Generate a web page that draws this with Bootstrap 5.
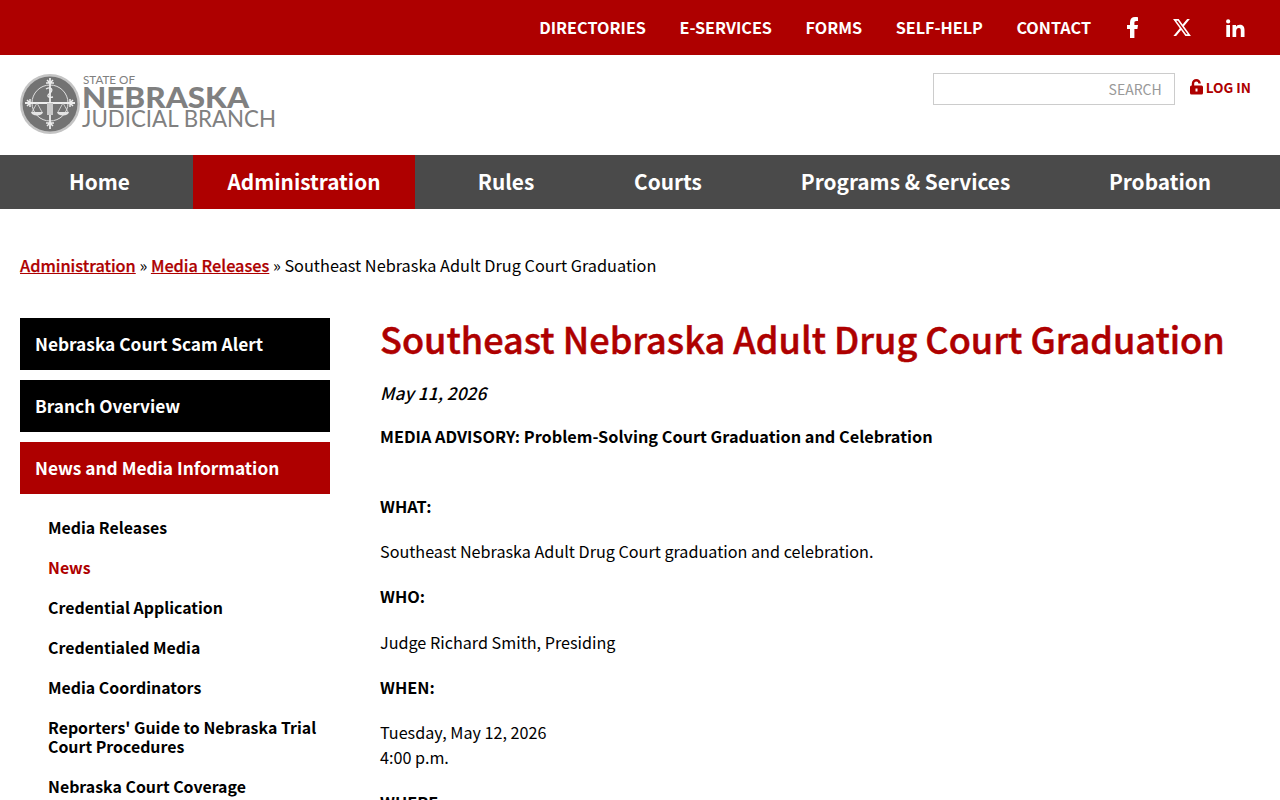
<!DOCTYPE html>
<html lang="en">
<head>
  <meta charset="UTF-8">
  <title>Southeast Nebraska Adult Drug Court Graduation</title>
  <meta name="viewport" content="width=device-width, initial-scale=1">
  <link href="https://cdn.jsdelivr.net/npm/bootstrap@5.3.0/dist/css/bootstrap.min.css" rel="stylesheet">
  <style>
    html, body { height: 800px; overflow: hidden; }
    body { font-family: "Noto Sans CJK SC", "Liberation Sans", sans-serif; font-size: 16.18px; line-height: 25px; color: #000; }
    a { color: #ae0000; }
    .top-strip { height: 55px; background: #ae0000; padding-right: 35px; }
    .top-strip a { color: #fff; font-weight: 700; font-size: 16.2px; text-decoration: none; }
    .top-links { gap: 33.5px; }
    .top-social { gap: 35px; margin-left: 36px; }
    .brand-row { height: 100px; padding: 18px 29px 0 20px; }
    .search-box { width: 242px; height: 32px; border: 1px solid #ccc; font-size: 14px; color: #999; padding: 3px 12px 0 0; text-align: right; }
    .login-link { margin-left: 15px; font-size: 13.6px; font-weight: 700; text-decoration: none; line-height: 28px; gap: 3px; }
    .main-menu { height: 54px; background: #4a4a4a; }
    .main-menu a { display: block; height: 54px; line-height: 53px; font-size: 20.8px; font-weight: 600; color: #fff; text-decoration: none; text-align: center; }
    .main-menu a.on { background: #ae0000; }
    .main-menu a:nth-child(1) { width: 193px; padding-left: 6px; }
    .main-menu a:nth-child(2) { width: 222px; }
    .main-menu a:nth-child(3) { width: 182px; }
    .main-menu a:nth-child(4) { width: 142px; }
    .main-menu a:nth-child(5) { width: 333px; }
    .main-menu a:nth-child(6) { width: 176px; }
    .crumbs { padding: 44px 20px 0; height: 109px; font-size: 16.3px; }
    .crumbs a { font-weight: 500; -webkit-text-stroke: 0.25px #ae0000; }
    .page-cols { padding: 0 20px; gap: 50px; }
    .side-col { width: 310px; flex: none; }
    .side-btn { display: block; height: 52px; line-height: 52px; padding-left: 15px; margin-bottom: 10px; background: #000; color: #fff; font-size: 17.3px; font-weight: 600; text-decoration: none; }
    .side-btn.on { background: #ae0000; }
    .side-sub { padding: 14px 0 0 28px; margin: 0; list-style: none; font-size: 15.9px; }
    .side-sub li { margin-bottom: 21px; line-height: 19px; }
    .side-sub a { color: #000; font-weight: 600; text-decoration: none; }
    .side-sub a.on { color: #ae0000; }
    .main-col { flex: 1; min-width: 0; }
    .main-col h1 { color: #ae0000; font-size: 36.1px; line-height: 44px; font-weight: 500; -webkit-text-stroke: 0.5px #ae0000; margin: -2px 0 20px; white-space: nowrap; }
    .main-col p { margin: 0 0 20.2px; }
    .main-col strong { font-size: 16.3px; }
    .main-col p.release-date { font-size: 17.4px; font-style: italic; font-weight: 500; margin-bottom: 19px; }
    .main-col p.spaced-head { margin-bottom: 45px; }
  </style>
</head>
<body>
  <div class="top-strip d-flex justify-content-end align-items-center">
    <div class="d-flex top-links">
      <a href="#">DIRECTORIES</a>
      <a href="#">E-SERVICES</a>
      <a href="#">FORMS</a>
      <a href="#">SELF-HELP</a>
      <a href="#">CONTACT</a>
    </div>
    <div class="d-flex top-social align-items-center">
      <a href="#" aria-label="Facebook"><svg width="11" height="21" viewBox="0 0 11 21" class="d-block"><path fill="#fff" d="M3 21V12H0V8h3V5.200C3 1.800 5 0 8 0c1.300 0 3 0.200 3 0.200V4H9.300C7.800 4 7.400 4.800 7.400 5.800V8H11l-0.600 4H7.400v9z"/></svg></a>
      <a href="#" aria-label="X"><svg width="18" height="17" viewBox="1.200 2.200 21.700 19.600" preserveAspectRatio="none" class="d-block"><path fill="#fff" d="M18.244 2.250h3.308l-7.227 8.260 8.502 11.240H16.170l-5.214-6.817L4.990 21.750H1.680l7.730-8.835L1.254 2.250H8.080l4.713 6.231zm-1.161 17.520h1.833L7.084 4.126H5.117z"/></svg></a>
      <a href="#" aria-label="LinkedIn"><svg width="19" height="18" viewBox="0 0 19 18" class="d-block"><path fill="#fff" d="M0.300 6h3.700v12H0.300zM2.150 0.300a2.100 2.100 0 1 1 0 4.200 2.100 2.100 0 0 1 0-4.200zM6.500 6h3.500v1.700c0.600-1.100 2-2 3.800-2 3.900 0 4.700 2.500 4.700 5.800V18h-3.700v-5.700c0-1.400 0-3.200-1.900-3.200s-2.700 1.500-2.700 3.100V18H6.500z"/></svg></a>
    </div>
  </div>

  <div class="brand-row d-flex justify-content-between">
    <svg width="258" height="64" viewBox="0 0 258 64" role="img" aria-label="State of Nebraska Judicial Branch">
      <circle cx="30" cy="31" r="30" fill="#c4c4c4"/>
      <circle cx="30" cy="31" r="27.500" fill="#737373"/>
      <circle cx="30" cy="30" r="18" fill="none" stroke="#e0e0e0" stroke-width="1"/>
      <path d="M30 5v51M5 30h50" stroke="#ededed" stroke-width="1.800"/>
      <path d="M26 10h8M26 50h8M10 26v8M50 26v8M27 7l3 3 3-3M27 53l3-3 3 3M7 27l3 3-3 3M53 27l-3 3 3 3" fill="none" stroke="#ededed" stroke-width="1.500"/>
      <path d="M17 30l-5 9M17 30l5 9M43 30l-5 9M43 30l5 9" stroke="#e0e0e0" stroke-width="0.800"/>
      <path d="M11 39a6 3.500 0 0 0 12 0zM37 39a6 3.500 0 0 0 12 0z" fill="#e4e4e4"/>
      <rect x="27" y="30" width="6" height="12" fill="#c9c9c9"/>
      <path d="M26 16c5-3 8 1 4 4s-2 5 3 4" fill="none" stroke="#ededed" stroke-width="1.300"/>
      <text x="63" y="10.500" font-family="Lato, sans-serif" font-size="12" fill="#808080" textLength="52" lengthAdjust="spacingAndGlyphs">STATE OF</text>
      <text x="62" y="34.500" font-family="Lato, sans-serif" font-size="29" font-weight="900" fill="#808080" textLength="167" lengthAdjust="spacingAndGlyphs">NEBRASKA</text>
      <text x="62" y="54" font-family="Lato, sans-serif" font-size="23" font-weight="400" fill="#808080" textLength="194" lengthAdjust="spacingAndGlyphs">JUDICIAL BRANCH</text>
    </svg>
    <div class="d-flex align-items-start">
      <div class="search-box">SEARCH</div>
      <a class="login-link d-flex align-items-center" href="#">
        <svg width="13" height="16" viewBox="0 0 13 16"><path fill="none" stroke="#ae0000" stroke-width="2.400" d="M3 7V4.500a3.300 3.300 0 0 1 6.600 0"/><rect y="6.500" width="13" height="9" rx="1.500" fill="#ae0000"/><rect x="5.500" y="9.500" width="2" height="3" fill="#fff"/></svg>LOG IN</a>
    </div>
  </div>

  <nav class="main-menu d-flex">
    <a href="#">Home</a>
    <a href="#" class="on">Administration</a>
    <a href="#">Rules</a>
    <a href="#">Courts</a>
    <a href="#">Programs &amp; Services</a>
    <a href="#">Probation</a>
  </nav>

  <div class="crumbs"><a href="#">Administration</a> » <a href="#">Media Releases</a> » Southeast Nebraska Adult Drug Court Graduation</div>

  <div class="page-cols d-flex">
    <aside class="side-col">
      <a class="side-btn" href="#">Nebraska Court Scam Alert</a>
      <a class="side-btn" href="#">Branch Overview</a>
      <a class="side-btn on" href="#">News and Media Information</a>
      <ul class="side-sub">
        <li><a href="#">Media Releases</a></li>
        <li><a href="#" class="on">News</a></li>
        <li><a href="#">Credential Application</a></li>
        <li><a href="#">Credentialed Media</a></li>
        <li><a href="#">Media Coordinators</a></li>
        <li><a href="#">Reporters' Guide to Nebraska Trial Court Procedures</a></li>
        <li><a href="#">Nebraska Court Coverage</a></li>
      </ul>
    </aside>
    <main class="main-col">
      <h1>Southeast Nebraska Adult Drug Court Graduation</h1>
      <p class="release-date">May 11, 2026</p>
      <p class="spaced-head"><strong>MEDIA ADVISORY: Problem-Solving Court Graduation and Celebration</strong></p>
      <p><strong>WHAT:</strong></p>
      <p>Southeast Nebraska Adult Drug Court graduation and celebration.</p>
      <p><strong>WHO:</strong></p>
      <p>Judge Richard Smith, Presiding</p>
      <p><strong>WHEN:</strong></p>
      <p>Tuesday, May 12, 2026<br>4:00 p.m.</p>
      <p><strong>WHERE:</strong></p>
    </main>
  </div>
  <script src="https://cdn.jsdelivr.net/npm/bootstrap@5.3.0/dist/js/bootstrap.bundle.min.js"></script>
</body>
</html>
